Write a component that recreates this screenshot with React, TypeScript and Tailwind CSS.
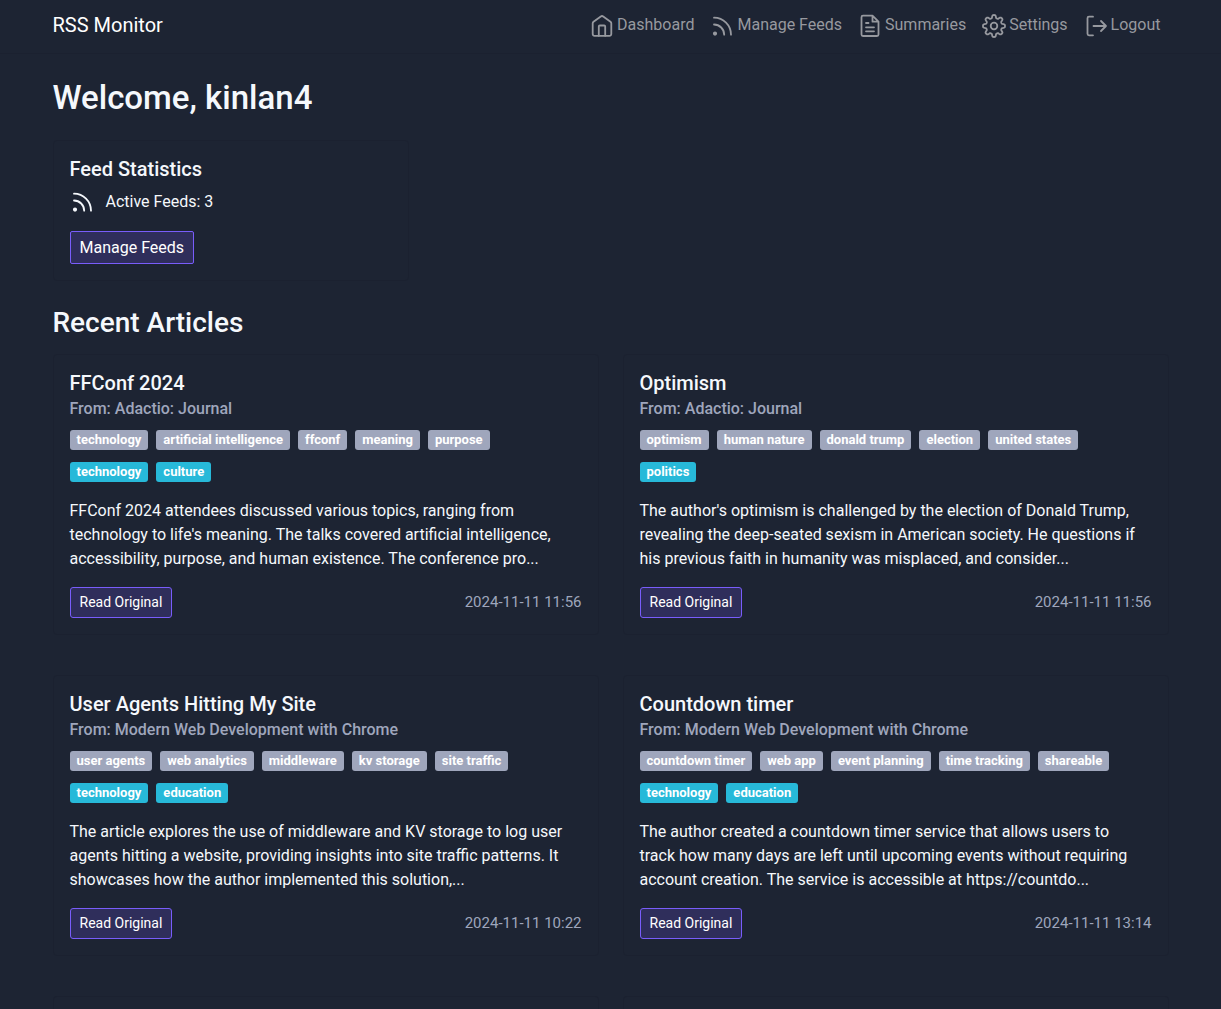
import React from "react";

type IconProps = { className?: string };

function Svg({ children, className = "" }: { children: React.ReactNode; className?: string }) {
  return (
    <svg
      viewBox="0 0 24 24"
      fill="none"
      stroke="currentColor"
      strokeWidth="1.8"
      strokeLinecap="round"
      strokeLinejoin="round"
      aria-hidden="true"
      className={`size-6 shrink-0 ${className}`}
    >
      {children}
    </svg>
  );
}

const HomeIcon = (p: IconProps) => (
  <Svg {...p}>
    <path d="M2.700 9.300c0-.7.3-1.200.8-1.600l7.300-5.300c.7-.5 1.700-.5 2.400 0l7.300 5.300c.5.4.8.9.8 1.600V20a1.800 1.800 0 0 1-1.800 1.800h-15A1.800 1.800 0 0 1 2.700 20z" />
    <path d="M8.800 21.800v-9.300a1 1 0 0 1 1-1h4.400a1 1 0 0 1 1 1v9.300" />
  </Svg>
);

const FeedIcon = (p: IconProps) => (
  <Svg {...p}>
    <path d="M4 3.700c9.400 0 17 7.600 17 17M4 10.500c5.600 0 10.200 4.600 10.200 10.200" />
    <circle cx="5" cy="19.600" r="1.200" fill="currentColor" />
  </Svg>
);

const PageIcon = (p: IconProps) => (
  <Svg {...p}>
    <path d="M14.500 1.700H5a1.500 1.500 0 0 0-1.500 1.500v17.300A1.500 1.500 0 0 0 5 22h14a1.500 1.500 0 0 0 1.500-1.500V7.700zM14.500 1.700v6h6M8 9h2.500M8 13.300h8M8 17.300h8" />
  </Svg>
);

const gearPath = (() => {
  const points: string[] = [];
  for (let i = 0; i <= 160; i++) {
    const a = (i / 160) * Math.PI * 2;
    const wave = Math.tanh(2 * Math.cos(8 * a)) / Math.tanh(2);
    const r = 9.5 + 1.5 * wave;
    points.push(`${(12 + r * Math.cos(a)).toFixed(2)} ${(12 + r * Math.sin(a)).toFixed(2)}`);
  }
  return `M${points.join("L")}Z`;
})();

const GearIcon = (p: IconProps) => (
  <Svg {...p}>
    <path d={gearPath} />
    <circle cx="12" cy="12" r="3.300" />
  </Svg>
);

const LogoutIcon = (p: IconProps) => (
  <Svg {...p}>
    <path d="M9 2.700H5a1.500 1.500 0 0 0-1.500 1.500v15.600A1.500 1.500 0 0 0 5 21.300h4M9.500 12H22M17 7l5 5-5 5" />
  </Svg>
);

const navItems = [
  { label: "Dashboard", Icon: HomeIcon },
  { label: "Manage Feeds", Icon: FeedIcon },
  { label: "Summaries", Icon: PageIcon },
  { label: "Settings", Icon: GearIcon },
  { label: "Logout", Icon: LogoutIcon },
];

type Article = {
  title: string;
  source: string;
  tags: string[];
  categories: string[];
  summary: string[];
  date: string;
};

const articles: Article[] = [
  {
    title: "FFConf 2024",
    source: "Adactio: Journal",
    tags: ["technology", "artificial intelligence", "ffconf", "meaning", "purpose"],
    categories: ["technology", "culture"],
    summary: [
      "FFConf 2024 attendees discussed various topics, ranging from",
      "technology to life's meaning. The talks covered artificial intelligence,",
      "accessibility, purpose, and human existence. The conference pro...",
    ],
    date: "2024-11-11 11:56",
  },
  {
    title: "Optimism",
    source: "Adactio: Journal",
    tags: ["optimism", "human nature", "donald trump", "election", "united states"],
    categories: ["politics"],
    summary: [
      "The author's optimism is challenged by the election of Donald Trump,",
      "revealing the deep-seated sexism in American society. He questions if",
      "his previous faith in humanity was misplaced, and consider...",
    ],
    date: "2024-11-11 11:56",
  },
  {
    title: "User Agents Hitting My Site",
    source: "Modern Web Development with Chrome",
    tags: ["user agents", "web analytics", "middleware", "kv storage", "site traffic"],
    categories: ["technology", "education"],
    summary: [
      "The article explores the use of middleware and KV storage to log user",
      "agents hitting a website, providing insights into site traffic patterns. It",
      "showcases how the author implemented this solution,...",
    ],
    date: "2024-11-11 10:22",
  },
  {
    title: "Countdown timer",
    source: "Modern Web Development with Chrome",
    tags: ["countdown timer", "web app", "event planning", "time tracking", "shareable"],
    categories: ["technology", "education"],
    summary: [
      "The author created a countdown timer service that allows users to",
      "track how many days are left until upcoming events without requiring",
      "account creation. The service is accessible at https://countdo...",
    ],
    date: "2024-11-11 13:14",
  },
];

function Tags({ items, className }: { items: string[]; className: string }) {
  return (
    <ul className="flex flex-wrap gap-2">
      {items.map((t) => (
        <li key={t} className={`rounded-[3px] px-[7px] text-[13px] leading-5 font-bold text-white ${className}`}>
          {t}
        </li>
      ))}
    </ul>
  );
}

function ArticleCard({ article }: { article: Article }) {
  return (
    <article className="rounded-sm border border-[#1b2130] p-4">
      <h3 className="text-xl leading-6 font-medium">{article.title}</h3>
      <p className="mt-0.5 mb-[9px] text-base leading-6 font-medium text-[#9fa6bc]">From: {article.source}</p>
      <div className="flex flex-col gap-3">
        <Tags items={article.tags} className="bg-[#9fa6bc]" />
        <Tags items={article.categories} className="bg-[#27b9d9]" />
      </div>
      <p className="mt-[17px] text-base leading-6">
        {article.summary.map((line) => (
          <React.Fragment key={line}>
            {line}
            <br />
          </React.Fragment>
        ))}
      </p>
      <div className="mt-4 flex items-center justify-between">
        <a
          href="#"
          className="rounded-[3px] border border-[#795dfb] bg-[#2f2e5b] px-[9px] text-sm leading-[29px] text-white"
        >
          Read Original
        </a>
        <time className="text-[15px] text-[#9fa6bc]">{article.date}</time>
      </div>
    </article>
  );
}

export default function App() {
  return (
    <div className="h-screen overflow-hidden bg-[#1d2433] font-['Roboto',sans-serif] text-[#f5f8fc]">
      <header className="border-b border-[#1b2130]">
        <div className="mx-auto flex h-[53px] max-w-[1140px] items-center justify-between px-3 pb-0.5">
          <a href="#" className="pb-0.5 text-xl text-white">
            RSS Monitor
          </a>
          <nav className="flex items-center gap-4 pr-2 text-base text-[#97999f]">
            {navItems.map(({ label, Icon }) => (
              <a key={label} href="#" className="flex items-center gap-[3px]">
                <Icon />
                <span className="pb-0.5">{label}</span>
              </a>
            ))}
          </nav>
        </div>
      </header>
      <main className="mx-auto max-w-[1140px] px-3 pt-6">
        <h1 className="text-[33px] leading-10 font-medium">Welcome, kinlan4</h1>
        <div className="mt-[22px] grid grid-cols-3 gap-6">
          <section className="rounded-sm border border-[#1b2130] p-4">
            <h2 className="text-xl leading-6 font-medium">Feed Statistics</h2>
            <p className="mt-[9px] flex items-center gap-3 text-base leading-6">
              <FeedIcon />
              Active Feeds: 3
            </p>
            <button className="mt-[17px] rounded-xs border border-[#795dfb] bg-[#2f2e5b] px-[9px] text-base leading-[31px] text-white">
              Manage Feeds
            </button>
          </section>
        </div>
        <h2 className="mt-6 text-[28px] leading-9 font-medium">Recent Articles</h2>
        <div className="mt-[13px] grid grid-cols-2 gap-x-6 gap-y-10">
          {articles.map((a) => (
            <ArticleCard key={a.title} article={a} />
          ))}
          <div className="h-8 rounded-t-sm border border-b-0 border-[#1b2130]" />
          <div className="h-8 rounded-t-sm border border-b-0 border-[#1b2130]" />
        </div>
      </main>
    </div>
  );
}
